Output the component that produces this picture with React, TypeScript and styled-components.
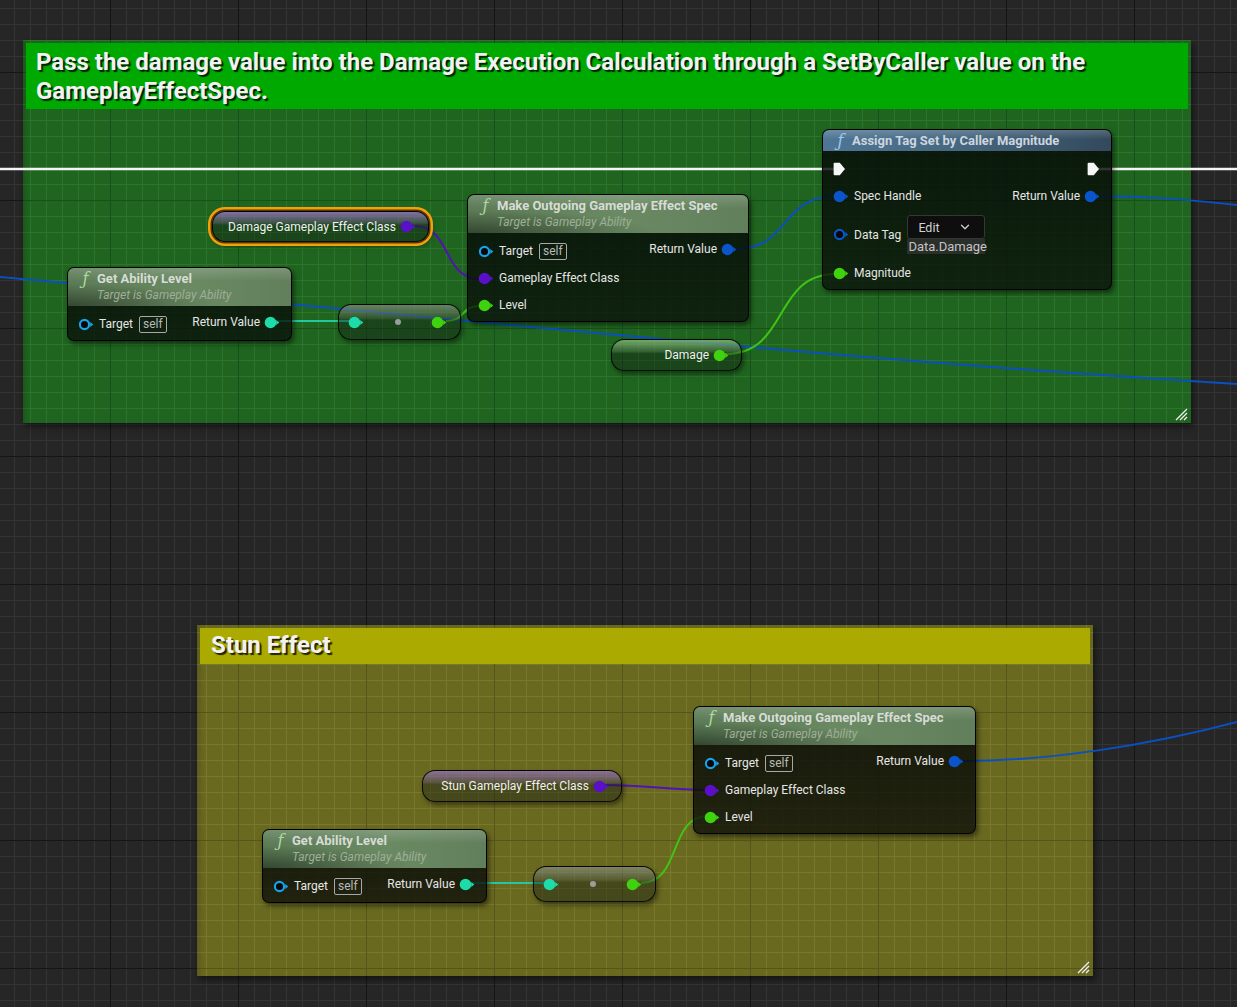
import React from "react";
import styled, { createGlobalStyle, css } from "styled-components";
import { ChevronDown } from "lucide-react";

const GlobalStyle = createGlobalStyle`
  html, body { margin: 0; padding: 0; background: #262626; overflow: hidden; }
  body { font-family: Roboto, "Noto Sans", "Liberation Sans", sans-serif; }
  * { box-sizing: border-box; }
`;

const gridBg = (base: string, minor: string, major: string) => css`
  background-color: ${base};
  background-image:
    linear-gradient(to right, ${major} 1px, transparent 1px),
    linear-gradient(to bottom, ${major} 1px, transparent 1px),
    linear-gradient(to right, ${minor} 1px, transparent 1px),
    linear-gradient(to bottom, ${minor} 1px, transparent 1px);
  background-size: 128px 128px, 128px 128px, 16px 16px, 16px 16px;
  background-position: 110px 72px;
  background-attachment: fixed;
`;

const Canvas = styled.main`
  position: relative;
  width: 1237px;
  height: 1007px;
  overflow: hidden;
  ${gridBg("#262626", "#343434", "#151515")}
`;

/* ---------- comment boxes ---------- */
type Tone = "green" | "yellow";
const tones: Record<Tone, { header: string; base: string; minor: string; major: string }> = {
  green: { header: "#00a900", base: "#1f651f", minor: "#2c752c", major: "#17511a" },
  yellow: { header: "#aaaa00", base: "#6a6920", minor: "#79782e", major: "#57561a" },
};

const CommentFrame = styled.section<{ $x: number; $y: number; $w: number; $h: number; $tone: Tone }>`
  position: absolute;
  left: ${(p) => p.$x}px;
  top: ${(p) => p.$y}px;
  width: ${(p) => p.$w}px;
  height: ${(p) => p.$h}px;
  padding: 3px;
  display: flex;
  flex-direction: column;
  ${(p) => gridBg(tones[p.$tone].base, tones[p.$tone].minor, tones[p.$tone].major)}
  box-shadow: 2px 4px 6px rgba(0, 0, 0, 0.45), inset 6px 0 6px -4px rgba(0, 0, 0, 0.18);
`;

const CommentHeader = styled.header<{ $tone: Tone; $pad: string }>`
  background: ${(p) => tones[p.$tone].header};
  padding: ${(p) => p.$pad};
  color: #f2f2f2;
  font-family: Roboto, "Liberation Sans", sans-serif;
  font-weight: 700;
  font-size: 24px;
  line-height: 29px;
  text-shadow: 2px 2px 1px rgba(0, 0, 0, 0.8);
`;

const Grip = styled.svg`
  position: absolute;
  right: 3px;
  bottom: 2px;
`;

function Comment(props: { x: number; y: number; w: number; h: number; tone: Tone; pad: string; title: string }) {
  return (
    <CommentFrame $x={props.x} $y={props.y} $w={props.w} $h={props.h} $tone={props.tone}>
      <CommentHeader $tone={props.tone} $pad={props.pad}>{props.title}</CommentHeader>
      <Grip width="13" height="13" viewBox="0 0 13 13">
        <path d="M1 12 L12 1 M5 12 L12 5 M9 12 L12 9" stroke="#f0f0f0" strokeWidth="1.3" />
      </Grip>
    </CommentFrame>
  );
}

/* ---------- wires ---------- */
const WireLayer = styled.svg`
  position: absolute;
  left: 0;
  top: 0;
  pointer-events: none;
`;

const C = {
  exec: "#f4f4f4",
  struct: "#0a55cc",
  object: "#17a2ec",
  cls: "#5a0fc8",
  float: "#3fd20f",
  int: "#1edcaa",
};

const wires: { d: string; color: string; w: number }[] = [
  { d: "M 0 169 L 836 169", color: C.exec, w: 2.6 },
  { d: "M 1092 169 L 1237 169", color: C.exec, w: 2.6 },
  { d: "M 0 277 C 400 313, 800 357, 1237 384", color: "#0a50c0", w: 2 },
  { d: "M 736 249 C 790 249, 780 196, 836 196", color: "#0a50c0", w: 2 },
  { d: "M 1098 196 C 1150 196, 1190 200, 1237 205", color: "#0a50c0", w: 2 },
  { d: "M 414 226 C 452 226, 442 279, 480 279", color: "#5212b4", w: 2 },
  { d: "M 278 321 L 352 321", color: "#22c9a0", w: 2 },
  { d: "M 446 321 C 466 321, 460 306, 480 306", color: "#40c414", w: 2 },
  { d: "M 725 354 C 790 354, 772 274, 836 274", color: "#40c414", w: 2 },
  { d: "M 604 785 C 650 785, 664 790, 708 790", color: "#5212b4", w: 2 },
  { d: "M 472 883 L 548 883", color: "#22c9a0", w: 2 },
  { d: "M 641 883 C 682 883, 668 816, 708 816", color: "#40c414", w: 2 },
  { d: "M 962 761 C 1050 761, 1150 745, 1237 722", color: "#0a50c0", w: 2 },
];

/* ---------- pins ---------- */
const PinSvg = styled.svg`
  flex: none;
  display: block;
`;

function DataPin({ color, hollow }: { color: string; hollow?: boolean }) {
  return (
    <PinSvg width="16" height="13" viewBox="0 0 16 13">
      {hollow ? (
        <circle cx="6.5" cy="6.5" r="4.6" fill="#080808" stroke={color} strokeWidth="2.1" />
      ) : (
        <circle cx="6.5" cy="6.5" r="5.8" fill={color} />
      )}
      <path d="M12.2 4 L15.3 6.5 L12.2 9 Z" fill={color} />
    </PinSvg>
  );
}

function ExecPin() {
  return (
    <PinSvg width="13" height="14" viewBox="0 0 13 14">
      <path d="M1.6 0.8 H6.8 L12 7 L6.8 13.2 H1.6 Q0.6 13.2 0.6 12.2 V1.8 Q0.6 0.8 1.6 0.8 Z" fill="#f6f6f6" />
    </PinSvg>
  );
}

/* ---------- function nodes ---------- */
type Kind = "pure" | "call";

const NodeShell = styled.div<{ $x: number; $y: number; $w: number }>`
  position: absolute;
  left: ${(p) => p.$x}px;
  top: ${(p) => p.$y}px;
  width: ${(p) => p.$w}px;
  border-radius: 7px;
  border: 1px solid rgba(0, 0, 0, 0.9);
  overflow: hidden;
  background: linear-gradient(180deg, rgba(6, 9, 7, 0.84) 0%, rgba(10, 13, 10, 0.76) 100%);
  box-shadow: 2px 3px 5px rgba(0, 0, 0, 0.5);
`;

const NodeHeader = styled.div<{ $kind: Kind }>`
  padding: 2px 10px 2px 10px;
  ${(p) =>
    p.$kind === "pure"
      ? css`
          background:
            linear-gradient(180deg, rgba(255, 255, 255, 0.16) 0%, rgba(255, 255, 255, 0) 35%),
            radial-gradient(90% 80% at 0% 100%, rgba(12, 20, 12, 0.5), rgba(12, 20, 12, 0) 75%),
            linear-gradient(90deg, #5c7b56 0%, #6a8a63 55%, #627f5c 100%);
        `
      : css`
          background:
            linear-gradient(180deg, rgba(255, 255, 255, 0.18) 0%, rgba(255, 255, 255, 0) 45%),
            linear-gradient(90deg, #4f7696 0%, #45667f 50%, #33495c 100%);
        `}
`;

const TitleLine = styled.div`
  display: flex;
  align-items: center;
  gap: 4px;
  height: 17px;
`;

const FuncGlyph = styled.span<{ $kind: Kind }>`
  width: 15px;
  flex: none;
  text-align: center;
  font-family: "DejaVu Serif", "Liberation Serif", serif;
  font-style: italic;
  font-size: 16px;
  line-height: 17px;
  color: ${(p) => (p.$kind === "pure" ? "#a9dba0" : "#9cc8ee")};
`;

const Title = styled.span<{ $kind: Kind }>`
  font-weight: 700;
  font-size: 13px;
  line-height: 17px;
  color: ${(p) => (p.$kind === "pure" ? "#d8dcd6" : "#cdd6de")};
  white-space: nowrap;
`;

const Subtitle = styled.div`
  padding-left: 19px;
  font-style: italic;
  font-size: 12px;
  line-height: 17px;
  color: #9fae96;
  white-space: nowrap;
`;

const NodeBody = styled.div`
  display: flex;
  justify-content: space-between;
  padding: 6px 11px 4px 10px;
`;

const PinColumn = styled.div<{ $right?: boolean }>`
  display: flex;
  flex-direction: column;
  align-items: ${(p) => (p.$right ? "flex-end" : "flex-start")};
  gap: 3px;
`;

const PinRow = styled.div<{ $h?: number }>`
  height: ${(p) => p.$h ?? 24}px;
  display: flex;
  align-items: center;
  gap: 4px;
`;

const PinLabel = styled.span`
  font-size: 12px;
  color: #e6e6e6;
  white-space: nowrap;
  margin-left: 1px;
`;

const SelfBox = styled.span`
  margin-left: 2px;
  height: 17px;
  padding: 0 3px;
  border: 1px solid #a8a8a8;
  border-radius: 2px;
  font-size: 12px;
  line-height: 15px;
  color: #b9b9b9;
`;

const TagBlock = styled.div`
  display: flex;
  flex-direction: column;
  width: 78px;
  margin-left: 2px;
`;

const EditSelect = styled.div`
  height: 24px;
  display: flex;
  align-items: center;
  justify-content: space-between;
  padding: 0 12px 0 10px;
  background: #0d0e0d;
  border: 1px solid #333833;
  border-radius: 3px;
  font-size: 12.5px;
  color: #d2d2d2;
`;

const TagValue = styled.div`
  height: 15px;
  line-height: 15px;
  background: #2a2f2a;
  font-size: 13px;
  color: #c4c4c4;
  white-space: nowrap;
  padding-left: 1px;
`;

function NodeTitle({ kind, title, sub }: { kind: Kind; title: string; sub?: string }) {
  return (
    <NodeHeader $kind={kind}>
      <TitleLine>
        <FuncGlyph $kind={kind}>ƒ</FuncGlyph>
        <Title $kind={kind}>{title}</Title>
      </TitleLine>
      {sub && <Subtitle>{sub}</Subtitle>}
    </NodeHeader>
  );
}

function TargetRow() {
  return (
    <PinRow>
      <DataPin color={C.object} hollow />
      <PinLabel>Target</PinLabel>
      <SelfBox>self</SelfBox>
    </PinRow>
  );
}

function ReturnRow({ color }: { color: string }) {
  return (
    <PinRow $h={20}>
      <PinLabel>Return Value</PinLabel>
      <DataPin color={color} />
    </PinRow>
  );
}

function GetAbilityLevel({ x, y }: { x: number; y: number }) {
  return (
    <NodeShell $x={x} $y={y} $w={225}>
      <NodeTitle kind="pure" title="Get Ability Level" sub="Target is Gameplay Ability" />
      <NodeBody>
        <PinColumn>
          <TargetRow />
        </PinColumn>
        <PinColumn $right>
          <ReturnRow color={C.int} />
        </PinColumn>
      </NodeBody>
    </NodeShell>
  );
}

function MakeSpec({ x, y, w }: { x: number; y: number; w: number }) {
  return (
    <NodeShell $x={x} $y={y} $w={w}>
      <NodeTitle kind="pure" title="Make Outgoing Gameplay Effect Spec" sub="Target is Gameplay Ability" />
      <NodeBody>
        <PinColumn>
          <TargetRow />
          <PinRow>
            <DataPin color={C.cls} />
            <PinLabel>Gameplay Effect Class</PinLabel>
          </PinRow>
          <PinRow>
            <DataPin color={C.float} />
            <PinLabel>Level</PinLabel>
          </PinRow>
        </PinColumn>
        <PinColumn $right>
          <ReturnRow color={C.struct} />
        </PinColumn>
      </NodeBody>
    </NodeShell>
  );
}

function AssignTag() {
  return (
    <NodeShell $x={822} $y={129} $w={290}>
      <NodeTitle kind="call" title="Assign Tag Set by Caller Magnitude" />
      <NodeBody>
        <PinColumn>
          <PinRow>
            <ExecPin />
          </PinRow>
          <PinRow>
            <DataPin color={C.struct} />
            <PinLabel>Spec Handle</PinLabel>
          </PinRow>
          <PinRow $h={47}>
            <DataPin color={C.struct} hollow />
            <PinLabel>Data Tag</PinLabel>
            <TagBlock>
              <EditSelect>
                <span>Edit</span>
                <ChevronDown size={14} strokeWidth={2.2} color="#d0d0d0" />
              </EditSelect>
              <TagValue>Data.Damage</TagValue>
            </TagBlock>
          </PinRow>
          <PinRow>
            <DataPin color={C.float} />
            <PinLabel>Magnitude</PinLabel>
          </PinRow>
        </PinColumn>
        <PinColumn $right>
          <PinRow>
            <ExecPin />
          </PinRow>
          <PinRow>
            <PinLabel>Return Value</PinLabel>
            <DataPin color={C.struct} />
          </PinRow>
        </PinColumn>
      </NodeBody>
    </NodeShell>
  );
}

/* ---------- pill nodes ---------- */
const Pill = styled.div<{ $x: number; $y: number; $w: number; $h: number; $tint: string; $selected?: boolean }>`
  position: absolute;
  left: ${(p) => p.$x}px;
  top: ${(p) => p.$y}px;
  width: ${(p) => p.$w}px;
  height: ${(p) => p.$h}px;
  display: flex;
  align-items: center;
  border-radius: 13px;
  border: 1px solid rgba(0, 0, 0, 0.9);
  background:
    linear-gradient(180deg, rgba(255, 255, 255, 0.2) 0%, rgba(255, 255, 255, 0.08) 38%, rgba(255, 255, 255, 0) 44%),
    linear-gradient(180deg, ${(p) => p.$tint} 0%, rgba(0, 0, 0, 0) 48%),
    rgba(20, 26, 18, 0.42);
  box-shadow: ${(p) =>
    p.$selected
      ? "0 0 0 1.5px #5a3400, 0 0 0 4px #f2a00c, 2px 3px 6px rgba(0,0,0,0.5)"
      : "2px 3px 5px rgba(0,0,0,0.45)"};
`;

const VarPill = styled(Pill)`
  justify-content: flex-end;
  gap: 4px;
  padding: 0 12px 0 15px;
`;

const ConvPill = styled(Pill)`
  justify-content: space-between;
  padding: 0 13px 0 9px;
`;

const PillText = styled.span`
  font-size: 12px;
  color: #f0f0f0;
  white-space: nowrap;
`;

const KnotDot = styled.span`
  width: 6px;
  height: 6px;
  border-radius: 50%;
  background: #9c9c9c;
`;

function Conversion({ x, y }: { x: number; y: number }) {
  return (
    <ConvPill $x={x} $y={y} $w={123} $h={36} $tint="rgba(150,170,130,0.3)">
      <DataPin color={C.int} />
      <KnotDot />
      <DataPin color={C.float} />
    </ConvPill>
  );
}

export default function App() {
  return (
    <>
      <GlobalStyle />
      <Canvas>
        <Comment
          x={23}
          y={40}
          w={1168}
          h={383}
          tone="green"
          pad="5px 10px 3px 10px"
          title="Pass the damage value into the Damage Execution Calculation through a SetByCaller value on the GameplayEffectSpec."
        />
        <Comment x={197} y={625} w={896} h={351} tone="yellow" pad="3px 10px 4px 11px" title="Stun Effect" />

        <WireLayer width="1237" height="1007" viewBox="0 0 1237 1007">
          {wires.map((w, i) => (
            <path key={i} d={w.d} stroke={w.color} strokeWidth={w.w} fill="none" />
          ))}
        </WireLayer>

        <AssignTag />
        <MakeSpec x={467} y={194} w={282} />
        <GetAbilityLevel x={67} y={267} />
        <VarPill $x={212} $y={211} $w={217} $h={31} $tint="rgba(150,80,220,0.6)" $selected>
          <PillText>Damage Gameplay Effect Class</PillText>
          <DataPin color={C.cls} />
        </VarPill>
        <Conversion x={338} y={304} />
        <VarPill $x={611} $y={339} $w={131} $h={32} $tint="rgba(120,210,100,0.55)">
          <PillText>Damage</PillText>
          <DataPin color={C.float} />
        </VarPill>

        <VarPill $x={422} $y={770} $w={200} $h={32} $tint="rgba(150,80,220,0.5)">
          <PillText>Stun Gameplay Effect Class</PillText>
          <DataPin color={C.cls} />
        </VarPill>
        <MakeSpec x={693} y={706} w={283} />
        <GetAbilityLevel x={262} y={829} />
        <Conversion x={533} y={866} />
      </Canvas>
    </>
  );
}
